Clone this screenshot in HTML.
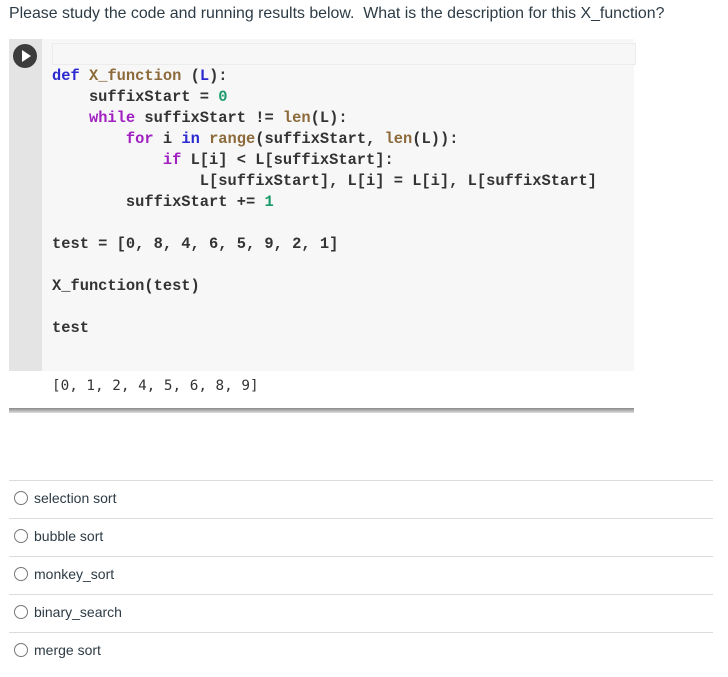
<!DOCTYPE html>
<html><head><style>
body{margin:0;width:728px;height:677px;background:#fff;font-family:"Liberation Sans",sans-serif;position:relative;overflow:hidden}
.q{position:absolute;left:9px;top:5px;font-size:15.9px;color:#2d3b45}
.cell{position:absolute;left:9px;top:39px;width:625px;height:332px;background:#f7f7f7}
.gut{position:absolute;left:0;top:0;width:33px;height:332px;background:#e4e4e4}
.play{position:absolute;left:4px;top:5px;width:24px;height:24px;border-radius:50%;background:#3c3c3c}
.play:after{content:"";position:absolute;left:9px;top:6px;border-left:9px solid #fff;border-top:6px solid transparent;border-bottom:6px solid transparent}
.inp{position:absolute;left:43px;top:4px;width:582px;height:20px;border:1px solid #ececec;background:#f7f7f7}
pre{margin:0;position:absolute;left:52px;font-family:"Liberation Mono",monospace;font-weight:bold;font-size:15.4px;line-height:21px;color:#333}
.k{color:#2a2ad0}.m{color:#a020c0}.f{color:#8c6a3a}.n{color:#1a9a6a}
.out{position:absolute;left:52px;top:378px;font-family:"DejaVu Sans Mono",monospace;font-size:14.3px;color:#333}
.bar{position:absolute;left:9px;top:408px;width:625px;height:5px;background:linear-gradient(#888,#ddd)}
.opt{position:absolute;left:9px;width:704px;border-top:1px solid #dcdcdc;height:37px}
.opt span{position:absolute;left:25px;top:9px;font-size:14px;color:#2d3b45}
.opt i{position:absolute;left:5px;top:10px;width:12px;height:12px;border:1px solid #777;border-radius:50%}
</style></head><body>
<div class="q">Please study the code and running results below.&nbsp; What is the description for this X_function?</div>
<div class="cell"><div class="gut"><div class="play"></div></div><div class="inp"></div></div>
<pre style="top:66px"><span class="k">def</span> <span class="f">X_function</span> (<span class="k">L</span>):
    suffixStart = <span class="n">0</span>
    <span class="m">while</span> suffixStart != <span class="f">len</span>(L):
        <span class="m">for</span> i <span class="k">in</span> <span class="f">range</span>(suffixStart, <span class="f">len</span>(L)):
            <span class="m">if</span> L[i] &lt; L[suffixStart]:
                L[suffixStart], L[i] = L[i], L[suffixStart]
        suffixStart += <span class="n">1</span>

test = [0, 8, 4, 6, 5, 9, 2, 1]

X_function(test)

test</pre>
<div class="out">[0, 1, 2, 4, 5, 6, 8, 9]</div>
<div class="bar"></div>
<div class="opt" style="top:480px"><i></i><span>selection sort</span></div>
<div class="opt" style="top:518px"><i></i><span>bubble sort</span></div>
<div class="opt" style="top:556px"><i></i><span>monkey_sort</span></div>
<div class="opt" style="top:594px"><i></i><span>binary_search</span></div>
<div class="opt" style="top:632px"><i></i><span>merge sort</span></div>
</body></html>
